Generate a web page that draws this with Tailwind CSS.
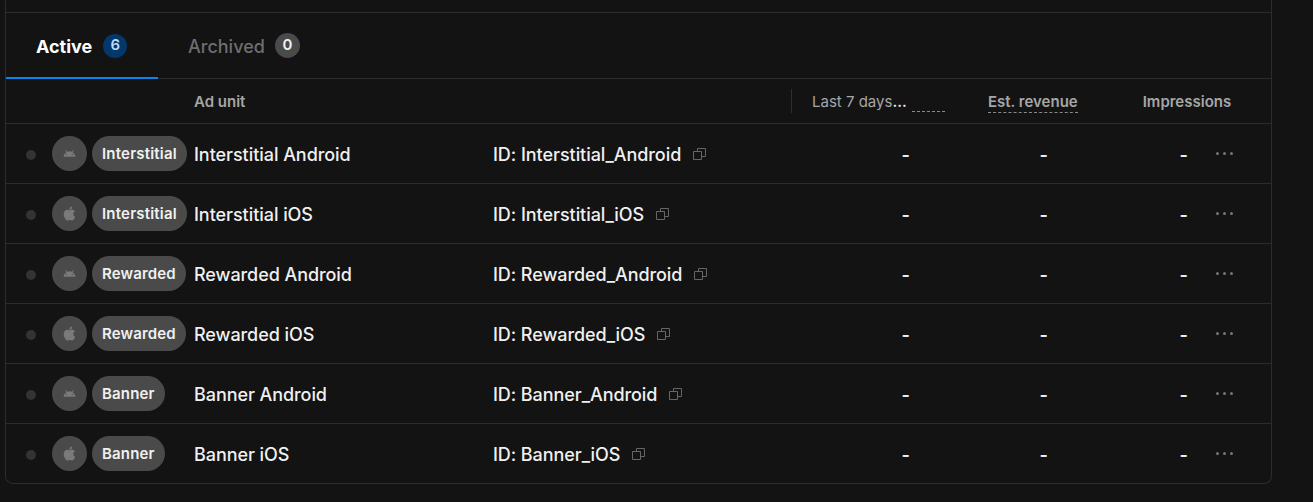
<!DOCTYPE html>
<html lang="en">
<head>
    <meta charset="UTF-8">
    <meta name="viewport" content="width=device-width, initial-scale=1.0">
    <title>Ad units</title>
    <script src="https://cdn.jsdelivr.net/npm/@tailwindcss/browser@4"></script>
</head>
<body class="bg-[#131313] h-[502px] overflow-hidden font-['Inter',sans-serif] text-[#f0f0f0]">
    <div class="ml-[5px] w-[1267px] h-[484px] border-x border-b border-[#2c2c2c] rounded-b-lg">
        <div class="h-[13px] border-b border-[#2c2c2c]"></div>

        <!-- tabs -->
        <div class="flex h-[66px] border-b border-[#2c2c2c]">
            <div class="relative w-[152px] flex items-center pl-[30px] gap-[11px]">
                <span class="pt-0.5 text-lg font-bold text-white">Active</span>
                <span class="w-6 h-6 rounded-full bg-[#04376b] text-[#b9dcff] text-[15px] font-semibold flex items-center justify-center">6</span>
                <span class="absolute left-0 right-0 -bottom-px h-0.5 bg-[#0a84f0]"></span>
            </div>
            <div class="flex items-center pl-[30px] gap-[10px]">
                <span class="pt-0.5 text-lg font-medium text-[#6e6e6e]">Archived</span>
                <span class="w-[25px] h-[25px] rounded-full bg-[#4a4a4a] text-[#f0f0f0] text-[15px] font-semibold flex items-center justify-center">0</span>
            </div>
        </div>

        <!-- table head -->
        <div class="flex items-center h-[45px] border-b border-[#2c2c2c] text-[15px] text-[#a6a6a6] font-semibold">
            <div class="w-[188px]"></div>
            <div class="w-[597px] pt-0.5">Ad unit</div>
            <div class="w-px h-6 bg-[#2f2f2f]"></div>
            <div class="w-[20px]"></div>
            <div class="flex items-center w-[176px]">
                <span class="pt-0.5 font-normal">Last 7 days</span><span class="pt-0.5 text-[#e6e6e6]">...</span>
                <span class="ml-[5px] w-[33px] h-[22px] border-b border-dashed border-[#8a8a8a]"></span>
            </div>
            <div class="mt-0.5 border-b border-dashed border-[#8a8a8a] leading-[20px]">Est. revenue</div>
            <div class="ml-[65px] pt-0.5">Impressions</div>
        </div>

        <!-- rows -->
        <div id="rows">
            <div class="flex items-center h-[60px] border-b border-[#2c2c2c]">
                <span class="ml-5 mt-[3px] w-2.5 h-2.5 rounded-full bg-[#333333]"></span>
                <span class="ml-4 w-[35px] h-[35px] rounded-full bg-[#4a4a4a] flex items-center justify-center">
                    <svg class="w-[13px] h-[13px] fill-[#7a7a7a]" viewBox="0 0 24 24"><path fill-rule="evenodd" d="M17.6 9.48l1.84-3.18c.16-.31.04-.69-.26-.85a.637.637 0 0 0-.83.22l-1.88 3.24a11.43 11.43 0 0 0-8.94 0L5.65 5.67a.643.643 0 0 0-.87-.2c-.28.18-.37.54-.22.83L6.4 9.48A10.81 10.81 0 0 0 1 18h22a10.81 10.81 0 0 0-5.4-8.52M7 15a1 1 0 1 1 0-2 1 1 0 0 1 0 2m10 0a1 1 0 1 1 0-2 1 1 0 0 1 0 2"/></svg>
                </span>
                <span class="ml-[5px] w-[102px] flex"><span class="h-[35px] px-2.5 pt-0.5 rounded-full bg-[#4a4a4a] text-[15px] tracking-[0.2px] font-semibold flex items-center">Interstitial</span></span>
                <span class="w-[299px] pt-0.5 text-lg tracking-[-0.05px] font-medium">Interstitial Android</span>
                <span class="w-[300px] flex items-center text-lg tracking-[-0.05px] font-medium"><span class="pt-0.5">ID: Interstitial_Android</span>
                    <svg class="ml-3 w-[13px] h-3 fill-none stroke-[#666666]" viewBox="0 0 13 12"><path d="M4.5 3.5v-3h8v8h-4"/><path d="M.5 3.5h8v8h-8z"/></svg>
                </span>
                <span class="w-[117px] pt-0.5 text-right text-lg font-semibold">-</span>
                <span class="w-[138px] pt-0.5 text-right text-lg font-semibold">-</span>
                <span class="w-[140px] pt-0.5 text-right text-lg font-semibold">-</span>
                <span class="ml-[28px] flex gap-1 -mt-px"><i class="block w-[3px] h-[3px] rounded-full bg-[#757575]"></i><i class="block w-[3px] h-[3px] rounded-full bg-[#757575]"></i><i class="block w-[3px] h-[3px] rounded-full bg-[#757575]"></i></span>
            </div>

            <div class="flex items-center h-[60px] border-b border-[#2c2c2c]">
                <span class="ml-5 mt-[3px] w-2.5 h-2.5 rounded-full bg-[#333333]"></span>
                <span class="ml-4 w-[35px] h-[35px] rounded-full bg-[#4a4a4a] flex items-center justify-center">
                    <svg class="w-[17px] h-[17px] fill-[#7a7a7a]" viewBox="0 0 24 24"><path d="M18.71 19.5c-.83 1.24-1.71 2.45-3.05 2.47-1.34.03-1.77-.79-3.29-.79-1.53 0-2 .77-3.27.82-1.31.05-2.3-1.32-3.14-2.53C4.25 17 2.94 12.45 4.7 9.39c.87-1.52 2.43-2.48 4.12-2.51 1.28-.02 2.5.87 3.29.87.78 0 2.26-1.07 3.81-.91.65.03 2.47.26 3.64 1.98-.09.06-2.17 1.28-2.15 3.81.03 3.02 2.65 4.03 2.68 4.04-.03.07-.42 1.44-1.38 2.83M13 3.5c.73-.83 1.94-1.46 2.94-1.5.13 1.17-.34 2.35-1.04 3.19-.69.85-1.83 1.51-2.95 1.42-.15-1.15.41-2.35 1.05-3.11z"/></svg>
                </span>
                <span class="ml-[5px] w-[102px] flex"><span class="h-[35px] px-2.5 pt-0.5 rounded-full bg-[#4a4a4a] text-[15px] tracking-[0.2px] font-semibold flex items-center">Interstitial</span></span>
                <span class="w-[299px] pt-0.5 text-lg tracking-[-0.05px] font-medium">Interstitial iOS</span>
                <span class="w-[300px] flex items-center text-lg tracking-[-0.05px] font-medium"><span class="pt-0.5">ID: Interstitial_iOS</span>
                    <svg class="ml-3 w-[13px] h-3 fill-none stroke-[#666666]" viewBox="0 0 13 12"><path d="M4.5 3.5v-3h8v8h-4"/><path d="M.5 3.5h8v8h-8z"/></svg>
                </span>
                <span class="w-[117px] pt-0.5 text-right text-lg font-semibold">-</span>
                <span class="w-[138px] pt-0.5 text-right text-lg font-semibold">-</span>
                <span class="w-[140px] pt-0.5 text-right text-lg font-semibold">-</span>
                <span class="ml-[28px] flex gap-1 -mt-px"><i class="block w-[3px] h-[3px] rounded-full bg-[#757575]"></i><i class="block w-[3px] h-[3px] rounded-full bg-[#757575]"></i><i class="block w-[3px] h-[3px] rounded-full bg-[#757575]"></i></span>
            </div>

            <div class="flex items-center h-[60px] border-b border-[#2c2c2c]">
                <span class="ml-5 mt-[3px] w-2.5 h-2.5 rounded-full bg-[#333333]"></span>
                <span class="ml-4 w-[35px] h-[35px] rounded-full bg-[#4a4a4a] flex items-center justify-center">
                    <svg class="w-[13px] h-[13px] fill-[#7a7a7a]" viewBox="0 0 24 24"><path fill-rule="evenodd" d="M17.6 9.48l1.84-3.18c.16-.31.04-.69-.26-.85a.637.637 0 0 0-.83.22l-1.88 3.24a11.43 11.43 0 0 0-8.94 0L5.65 5.67a.643.643 0 0 0-.87-.2c-.28.18-.37.54-.22.83L6.4 9.48A10.81 10.81 0 0 0 1 18h22a10.81 10.81 0 0 0-5.4-8.52M7 15a1 1 0 1 1 0-2 1 1 0 0 1 0 2m10 0a1 1 0 1 1 0-2 1 1 0 0 1 0 2"/></svg>
                </span>
                <span class="ml-[5px] w-[102px] flex"><span class="h-[35px] px-2.5 pt-0.5 rounded-full bg-[#4a4a4a] text-[15px] tracking-[0.15px] font-semibold flex items-center">Rewarded</span></span>
                <span class="w-[299px] pt-0.5 text-lg tracking-[-0.07px] font-medium">Rewarded Android</span>
                <span class="w-[300px] flex items-center text-lg tracking-[-0.07px] font-medium"><span class="pt-0.5">ID: Rewarded_Android</span>
                    <svg class="ml-3 w-[13px] h-3 fill-none stroke-[#666666]" viewBox="0 0 13 12"><path d="M4.5 3.5v-3h8v8h-4"/><path d="M.5 3.5h8v8h-8z"/></svg>
                </span>
                <span class="w-[117px] pt-0.5 text-right text-lg font-semibold">-</span>
                <span class="w-[138px] pt-0.5 text-right text-lg font-semibold">-</span>
                <span class="w-[140px] pt-0.5 text-right text-lg font-semibold">-</span>
                <span class="ml-[28px] flex gap-1 -mt-px"><i class="block w-[3px] h-[3px] rounded-full bg-[#757575]"></i><i class="block w-[3px] h-[3px] rounded-full bg-[#757575]"></i><i class="block w-[3px] h-[3px] rounded-full bg-[#757575]"></i></span>
            </div>

            <div class="flex items-center h-[60px] border-b border-[#2c2c2c]">
                <span class="ml-5 mt-[3px] w-2.5 h-2.5 rounded-full bg-[#333333]"></span>
                <span class="ml-4 w-[35px] h-[35px] rounded-full bg-[#4a4a4a] flex items-center justify-center">
                    <svg class="w-[17px] h-[17px] fill-[#7a7a7a]" viewBox="0 0 24 24"><path d="M18.71 19.5c-.83 1.24-1.71 2.45-3.05 2.47-1.34.03-1.77-.79-3.29-.79-1.53 0-2 .77-3.27.82-1.31.05-2.3-1.32-3.14-2.53C4.25 17 2.94 12.45 4.7 9.39c.87-1.52 2.43-2.48 4.12-2.51 1.28-.02 2.5.87 3.29.87.78 0 2.26-1.07 3.81-.91.65.03 2.47.26 3.64 1.98-.09.06-2.17 1.28-2.15 3.81.03 3.02 2.65 4.03 2.68 4.04-.03.07-.42 1.44-1.38 2.83M13 3.5c.73-.83 1.94-1.46 2.94-1.5.13 1.17-.34 2.35-1.04 3.19-.69.85-1.83 1.51-2.95 1.42-.15-1.15.41-2.35 1.05-3.11z"/></svg>
                </span>
                <span class="ml-[5px] w-[102px] flex"><span class="h-[35px] px-2.5 pt-0.5 rounded-full bg-[#4a4a4a] text-[15px] tracking-[0.15px] font-semibold flex items-center">Rewarded</span></span>
                <span class="w-[299px] pt-0.5 text-lg tracking-[-0.07px] font-medium">Rewarded iOS</span>
                <span class="w-[300px] flex items-center text-lg tracking-[-0.07px] font-medium"><span class="pt-0.5">ID: Rewarded_iOS</span>
                    <svg class="ml-3 w-[13px] h-3 fill-none stroke-[#666666]" viewBox="0 0 13 12"><path d="M4.5 3.5v-3h8v8h-4"/><path d="M.5 3.5h8v8h-8z"/></svg>
                </span>
                <span class="w-[117px] pt-0.5 text-right text-lg font-semibold">-</span>
                <span class="w-[138px] pt-0.5 text-right text-lg font-semibold">-</span>
                <span class="w-[140px] pt-0.5 text-right text-lg font-semibold">-</span>
                <span class="ml-[28px] flex gap-1 -mt-px"><i class="block w-[3px] h-[3px] rounded-full bg-[#757575]"></i><i class="block w-[3px] h-[3px] rounded-full bg-[#757575]"></i><i class="block w-[3px] h-[3px] rounded-full bg-[#757575]"></i></span>
            </div>

            <div class="flex items-center h-[60px] border-b border-[#2c2c2c]">
                <span class="ml-5 mt-[3px] w-2.5 h-2.5 rounded-full bg-[#333333]"></span>
                <span class="ml-4 w-[35px] h-[35px] rounded-full bg-[#4a4a4a] flex items-center justify-center">
                    <svg class="w-[13px] h-[13px] fill-[#7a7a7a]" viewBox="0 0 24 24"><path fill-rule="evenodd" d="M17.6 9.48l1.84-3.18c.16-.31.04-.69-.26-.85a.637.637 0 0 0-.83.22l-1.88 3.24a11.43 11.43 0 0 0-8.94 0L5.65 5.67a.643.643 0 0 0-.87-.2c-.28.18-.37.54-.22.83L6.4 9.48A10.81 10.81 0 0 0 1 18h22a10.81 10.81 0 0 0-5.4-8.52M7 15a1 1 0 1 1 0-2 1 1 0 0 1 0 2m10 0a1 1 0 1 1 0-2 1 1 0 0 1 0 2"/></svg>
                </span>
                <span class="ml-[5px] w-[102px] flex"><span class="h-[35px] px-2.5 pt-0.5 rounded-full bg-[#4a4a4a] text-[15px] tracking-[0.15px] font-semibold flex items-center">Banner</span></span>
                <span class="w-[299px] pt-0.5 text-lg tracking-[-0.07px] font-medium">Banner Android</span>
                <span class="w-[300px] flex items-center text-lg tracking-[-0.07px] font-medium"><span class="pt-0.5">ID: Banner_Android</span>
                    <svg class="ml-3 w-[13px] h-3 fill-none stroke-[#666666]" viewBox="0 0 13 12"><path d="M4.5 3.5v-3h8v8h-4"/><path d="M.5 3.5h8v8h-8z"/></svg>
                </span>
                <span class="w-[117px] pt-0.5 text-right text-lg font-semibold">-</span>
                <span class="w-[138px] pt-0.5 text-right text-lg font-semibold">-</span>
                <span class="w-[140px] pt-0.5 text-right text-lg font-semibold">-</span>
                <span class="ml-[28px] flex gap-1 -mt-px"><i class="block w-[3px] h-[3px] rounded-full bg-[#757575]"></i><i class="block w-[3px] h-[3px] rounded-full bg-[#757575]"></i><i class="block w-[3px] h-[3px] rounded-full bg-[#757575]"></i></span>
            </div>

            <div class="flex items-center h-[59px]">
                <span class="ml-5 mt-[3px] w-2.5 h-2.5 rounded-full bg-[#333333]"></span>
                <span class="ml-4 w-[35px] h-[35px] rounded-full bg-[#4a4a4a] flex items-center justify-center">
                    <svg class="w-[17px] h-[17px] fill-[#7a7a7a]" viewBox="0 0 24 24"><path d="M18.71 19.5c-.83 1.24-1.71 2.45-3.05 2.47-1.34.03-1.77-.79-3.29-.79-1.53 0-2 .77-3.27.82-1.31.05-2.3-1.32-3.14-2.53C4.25 17 2.94 12.45 4.7 9.39c.87-1.52 2.43-2.48 4.12-2.51 1.28-.02 2.5.87 3.29.87.78 0 2.26-1.07 3.81-.91.65.03 2.47.26 3.64 1.98-.09.06-2.17 1.28-2.15 3.81.03 3.02 2.65 4.03 2.68 4.04-.03.07-.42 1.44-1.38 2.83M13 3.5c.73-.83 1.94-1.46 2.94-1.5.13 1.17-.34 2.35-1.04 3.19-.69.85-1.83 1.51-2.95 1.42-.15-1.15.41-2.35 1.05-3.11z"/></svg>
                </span>
                <span class="ml-[5px] w-[102px] flex"><span class="h-[35px] px-2.5 pt-0.5 rounded-full bg-[#4a4a4a] text-[15px] tracking-[0.15px] font-semibold flex items-center">Banner</span></span>
                <span class="w-[299px] pt-0.5 text-lg tracking-[-0.07px] font-medium">Banner iOS</span>
                <span class="w-[300px] flex items-center text-lg tracking-[-0.07px] font-medium"><span class="pt-0.5">ID: Banner_iOS</span>
                    <svg class="ml-3 w-[13px] h-3 fill-none stroke-[#666666]" viewBox="0 0 13 12"><path d="M4.5 3.5v-3h8v8h-4"/><path d="M.5 3.5h8v8h-8z"/></svg>
                </span>
                <span class="w-[117px] pt-0.5 text-right text-lg font-semibold">-</span>
                <span class="w-[138px] pt-0.5 text-right text-lg font-semibold">-</span>
                <span class="w-[140px] pt-0.5 text-right text-lg font-semibold">-</span>
                <span class="ml-[28px] flex gap-1 -mt-px"><i class="block w-[3px] h-[3px] rounded-full bg-[#757575]"></i><i class="block w-[3px] h-[3px] rounded-full bg-[#757575]"></i><i class="block w-[3px] h-[3px] rounded-full bg-[#757575]"></i></span>
            </div>
        </div>
    </div>
</body>
</html>
